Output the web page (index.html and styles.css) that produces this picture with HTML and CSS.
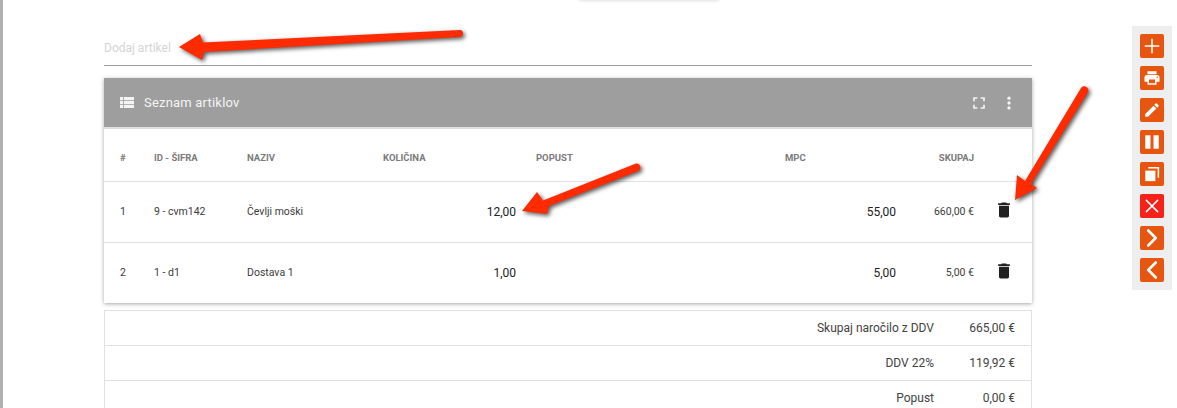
FILE: index.html

```html
<!DOCTYPE html>
<html lang="sl">
<head>
    <meta charset="UTF-8">
    <meta name="viewport" content="width=device-width, initial-scale=1.0">
    <title>Seznam artiklov</title>
    <link rel="stylesheet" href="styles.css">
</head>
<body>
    <div class="top-sliver"></div>

    <div class="page">
        <main class="content">
            <input class="add-item" type="text" placeholder="Dodaj artikel">

            <section class="panel">
                <header class="panel-head">
                    <svg class="icon-list" viewBox="3 5 18 14"><path d="M3 14h4v-4H3v4zm0 5h4v-4H3v4zM3 9h4V5H3v4zm5 5h13v-4H8v4zm0 5h13v-4H8v4zM8 5v4h13V5H8z"/></svg>
                    <h2>Seznam artiklov</h2>
                    <svg class="icon-full" viewBox="0 0 24 24"><path d="M7 14H5v5h5v-2H7v-3zm-2-4h2V7h3V5H5v5zm12 7h-3v2h5v-5h-2v3zM14 5v2h3v3h2V5h-5z"/></svg>
                    <svg class="icon-more" viewBox="0 0 24 24"><circle cx="12" cy="5.500" r="2.200"/><circle cx="12" cy="12" r="2.200"/><circle cx="12" cy="18.500" r="2.200"/></svg>
                </header>

                <table class="items">
                    <colgroup>
                        <col class="c-num"><col class="c-id"><col class="c-name"><col class="c-qty">
                        <col class="c-disc"><col class="c-price"><col class="c-total"><col>
                    </colgroup>
                    <thead>
                        <tr>
                            <th>#</th><th>ID - Šifra</th><th>Naziv</th><th>Količina</th>
                            <th>Popust</th><th>MPC</th><th class="right">Skupaj</th><th></th>
                        </tr>
                    </thead>
                    <tbody>
                        <tr>
                            <td>1</td><td>9 - cvm142</td><td>Čevlji moški</td>
                            <td class="amount qty">12,00</td><td></td>
                            <td class="amount">55,00</td><td class="right">660,00 €</td>
                            <td><svg class="icon-trash" viewBox="0 0 24 24"><path d="M6 19c0 1.100.9 2 2 2h8c1.100 0 2-.9 2-2V7H6v12zM19 4h-3.500l-1-1h-5l-1 1H5v2h14V4z"/></svg></td>
                        </tr>
                        <tr>
                            <td>2</td><td>1 - d1</td><td>Dostava 1</td>
                            <td class="amount qty">1,00</td><td></td>
                            <td class="amount">5,00</td><td class="right">5,00 €</td>
                            <td><svg class="icon-trash" viewBox="0 0 24 24"><path d="M6 19c0 1.100.9 2 2 2h8c1.100 0 2-.9 2-2V7H6v12zM19 4h-3.500l-1-1h-5l-1 1H5v2h14V4z"/></svg></td>
                        </tr>
                    </tbody>
                </table>
            </section>

            <div class="summary">
                <div class="sum-row"><span>Skupaj naročilo z DDV</span><span class="sum-val">665,00 €</span></div>
                <div class="sum-row"><span>DDV 22%</span><span class="sum-val">119,92 €</span></div>
                <div class="sum-row"><span>Popust</span><span class="sum-val">0,00 €</span></div>
            </div>
        </main>

        <aside class="tools">
            <button class="tool"><svg viewBox="0 0 24 24"><path class="line" d="M3 12h18M12 3v18"/></svg></button>
            <button class="tool"><svg viewBox="0 0 24 24"><path d="M19 8H5c-1.660 0-3 1.340-3 3v6h4v4h12v-4h4v-6c0-1.660-1.340-3-3-3zm-3 11H8v-5h8v5zm3-7c-.55 0-1-.45-1-1s.45-1 1-1 1 .45 1 1-.45 1-1 1zm-1-9H6v4h12V3z"/></svg></button>
            <button class="tool"><svg viewBox="0 0 24 24"><path d="M3 17.250V21h3.750L17.810 9.940l-3.750-3.750L3 17.250zM20.710 7.040c.39-.39.39-1.020 0-1.410l-2.340-2.340c-.39-.39-1.020-.39-1.410 0l-1.830 1.830 3.750 3.750 1.830-1.830z"/></svg></button>
            <button class="tool"><svg viewBox="0 0 24 24"><path d="M3 3h7v18H3zM14 3h7v18h-7z"/></svg></button>
            <button class="tool"><svg viewBox="0 0 24 24"><path d="M3 7.500h13.500V21.500H3z"/><path class="thin" d="M7 3.500h13.500V17"/></svg></button>
            <button class="tool danger"><svg viewBox="0 0 24 24"><path class="line" d="M4.500 4.500l15 15M19.500 4.500l-15 15"/></svg></button>
            <button class="tool"><svg viewBox="0 0 24 24"><path class="line wide" d="M7 2l10 10L7 22"/></svg></button>
            <button class="tool"><svg viewBox="0 0 24 24"><path class="line wide" d="M17 2L7 12l10 10"/></svg></button>
        </aside>
    </div>

    <!-- red arrows drawn over the screenshot -->
    <svg class="arrows" viewBox="0 0 1177 408">
        <g class="arrow">
            <path d="M179 47L200 34L203 42.500L460 30C464 30 464 36.500 460 37L204 52L202 60Z"/>
            <path d="M522 211L537 192L543 200.500L636 163.500C641 163 642 170 638 171L549 206L547 214Z"/>
            <path d="M1015 200L1017 175L1025 181L1081 88C1084 84 1090 88 1088 92L1031 184L1037 188Z"/>
        </g>
    </svg>
</body>
</html>
```

FILE: styles.css

```css
html, body {
    margin: 0;
    height: 408px;
    overflow: hidden;
}
body {
    position: relative;
    box-sizing: border-box;
    border-left: 3px solid #b0b0b0;
    background: #fff;
    font-family: Roboto, "Liberation Sans", sans-serif;
    color: #212121;
}
.top-sliver {
    position: absolute;
    top: -6px;
    left: 576px;
    width: 140px;
    height: 6px;
    box-shadow: 0 1px 3px rgba(0, 0, 0, 0.12);
}
.page {
    display: flex;
    align-items: flex-start;
}
.content {
    width: 928px;
    margin-left: 101px;
    flex: none;
}

.add-item {
    display: block;
    box-sizing: border-box;
    width: 100%;
    height: 32px;
    margin-top: 34px;
    padding: 0 0 4px;
    border: none;
    border-bottom: 1px solid #9e9e9e;
    outline: none;
    font: 12px Roboto, sans-serif;
    background: transparent;
}
.add-item::placeholder { color: #d4d4d4; }

.panel {
    margin-top: 12px;
    background: #fff;
    box-shadow: 0 1px 4px rgba(0, 0, 0, 0.35);
}
.panel-head {
    display: flex;
    align-items: center;
    height: 49px;
    padding: 0 14px 0 16px;
    background: #9e9e9e;
    border-bottom: 2px solid #dedede;
    color: #fff;
}
.panel-head svg { fill: #f4f4f4; flex: none; }
.panel-head h2 {
    margin: 0 0 0 10px;
    flex: 1;
    font-size: 13px;
    font-weight: 400;
    letter-spacing: 0.2px;
    color: #f4f4f4;
}
.icon-list { width: 14px; height: 11px; }
.icon-full { width: 20px; height: 20px; margin-right: 11px; }
.icon-more { width: 18px; height: 18px; }

.items {
    width: 100%;
    border-collapse: collapse;
    table-layout: fixed;
}
.c-num { width: 50px; }
.c-id { width: 93px; }
.c-name { width: 136px; }
.c-qty { width: 153px; }
.c-disc { width: 249px; }
.c-price { width: 111px; }
.c-total { width: 78px; }
.items th {
    box-sizing: border-box;
    height: 52px;
    padding: 6px 0 0;
    text-align: left;
    font-size: 9.500px;
    font-weight: 700;
    text-transform: uppercase;
    color: #7a7a7a;
    border-bottom: 1px solid #e0e0e0;
}
.items th:first-child, .items td:first-child { padding-left: 16px; }
.items td {
    height: 60px;
    padding: 0;
    font-size: 10.500px;
    color: #3c3c3c;
    border-bottom: 1px solid #e0e0e0;
}
.items tr:last-child td { border-bottom: none; }
.items .right { text-align: right; }
.items .amount {
    text-align: right;
    font-size: 12px;
    color: #212121;
}
.items .qty { padding-right: 20px; }
.icon-trash {
    display: block;
    width: 20px;
    height: 20px;
    margin-left: 20px;
    margin-bottom: 4px;
    fill: #212121;
}

.summary {
    margin-top: 7px;
    border: 1px solid #e0e0e0;
    border-bottom: none;
}
.sum-row {
    display: flex;
    justify-content: flex-end;
    align-items: center;
    height: 34px;
    border-bottom: 1px solid #e0e0e0;
    font-size: 12px;
    color: #424242;
}
.sum-val {
    width: 97px;
    padding-right: 16px;
    box-sizing: border-box;
    text-align: right;
}

.tools {
    display: flex;
    flex-direction: column;
    gap: 8px;
    flex: none;
    margin: 26px 0 0 100px;
    padding: 8px;
    background: #eeeeee;
}
.tool {
    display: block;
    width: 24px;
    height: 24px;
    padding: 3px;
    border: none;
    border-radius: 2px;
    background: #e65610;
}
.tool.danger { background: #f5221a; }
.tool svg { display: block; width: 18px; height: 18px; fill: #fff; overflow: visible; }
.tool .line {
    fill: none;
    stroke: #fff;
    stroke-width: 2px;
    stroke-linecap: round;
    stroke-linejoin: round;
}
.tool .line.wide { stroke-width: 3.500px; }
.tool .thin { fill: none; stroke: #fff; stroke-width: 2px; }

.arrows {
    position: absolute;
    top: 0;
    left: -3px;
    width: 1177px;
    height: 408px;
    pointer-events: none;
}
.arrow {
    fill: #ff2b00;
    filter: drop-shadow(2px 2px 2px rgba(0, 0, 0, 0.65));
}
```
